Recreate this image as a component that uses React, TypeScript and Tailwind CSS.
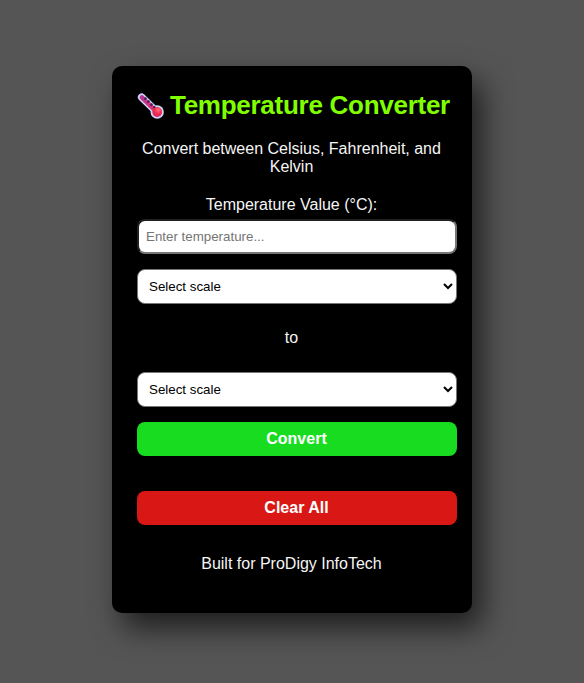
function ScaleSelect() {
  return (
    <select
      defaultValue=""
      className="block h-[35px] w-[320px] rounded-lg border border-[#767676] bg-white py-2 pr-2 pl-[7px] text-[13.3333px] leading-normal text-black"
    >
      <option value="">Select scale</option>
      <option value="C">Celsius</option>
      <option value="F">Fahrenheit</option>
      <option value="K">Kelvin</option>
    </select>
  );
}

function ThermometerIcon() {
  return (
    <svg viewBox="0 0 28 28" className="h-7 w-7 shrink-0" aria-hidden="true">
      <defs>
        <linearGradient id="tube" x1="3" y1="3" x2="19" y2="19" gradientUnits="userSpaceOnUse">
          <stop offset="0" stopColor="#b5379c" />
          <stop offset="1" stopColor="#e52b62" />
        </linearGradient>
        <radialGradient id="bulb" cx="0.6" cy="0.3" r="0.7">
          <stop offset="0" stopColor="#ff7180" />
          <stop offset="0.5" stopColor="#f4304f" />
          <stop offset="1" stopColor="#d92260" />
        </radialGradient>
      </defs>
      <path d="M4.7 5.2 L19.5 19.6" stroke="#c9d3fa" strokeWidth="7.6" strokeLinecap="round" />
      <circle cx="20.2" cy="20" r="6.7" fill="#c9d3fa" />
      <path d="M4.9 5.4 L19.5 19.6" stroke="url(#tube)" strokeWidth="4.6" strokeLinecap="round" />
      <circle cx="20.2" cy="20" r="4.9" fill="url(#bulb)" />
      <path d="M9.4 5.7l-2 2M12.4 8.7l-2 2M15.4 11.6l-2 2M18.1 14.3l-1.6 1.6" stroke="#332452" strokeWidth="1.8" />
    </svg>
  );
}

export default function App() {
  return (
    <main className="flex min-h-screen items-start justify-center bg-[#555555] pt-[66px] font-['Liberation_Sans',Arial,sans-serif] text-base leading-[18px] text-[#f5f5f5]">
      <section className="h-[547px] w-[360px] rounded-[10px] bg-black p-[25px] text-center shadow-[10px_15px_30px_rgba(0,0,0,0.65)]">
        <h1 className="flex h-[29px] items-center whitespace-nowrap text-[26px] leading-[29px] font-bold tracking-[-0.27px] text-[#80ff00]">
          <ThermometerIcon />
          <span className="ml-[5px]">Temperature Converter</span>
        </h1>
        <p className="mt-5 -ml-px">Convert between Celsius, Fahrenheit, and Kelvin</p>
        <label htmlFor="temperature" className="mt-5 -ml-px block">Temperature Value (°C):</label>
        <input
          id="temperature"
          placeholder="Enter temperature..."
          className="mt-[5px] block h-[35px] w-[320px] rounded-lg border-2 [border-style:inset] border-[#767676] bg-white py-2 pr-2 pl-[7px] text-[13.3333px] leading-normal text-black placeholder:text-[#757575]"
        />
        <div className="mt-[15px]"><ScaleSelect /></div>
        <p className="my-[25px] -ml-px">to</p>
        <ScaleSelect />
        <button className="mt-[15px] block h-[34px] w-[320px] rounded-lg bg-[#18dc20] pr-px font-bold text-white">Convert</button>
        <button className="mt-[35px] block h-[34px] w-[320px] rounded-lg bg-[#d91816] pr-px font-bold text-white">Clear All</button>
        <p className="mt-[30px] -ml-px">Built for ProDigy InfoTech</p>
      </section>
    </main>
  );
}
